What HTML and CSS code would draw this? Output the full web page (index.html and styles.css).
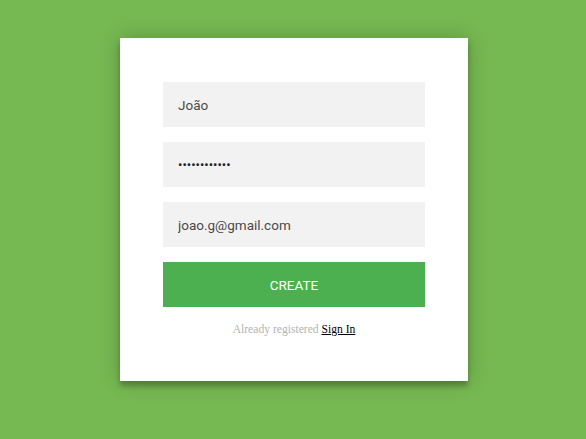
FILE: index.html
```html
<!DOCTYPE html>
<html>
<head>
<meta charset="utf-8">
<link rel="stylesheet" href="styles.css">
</head>
<body>
<div class="page">
  <form class="form">
    <input class="field" type="text" value="João">
    <input class="field field-pass" type="password" value="passwordpass">
    <input class="field" type="text" value="joao.g@gmail.com">
    <button class="btn" type="button">create</button>
    <p class="message">Already registered <a href="#">Sign In</a></p>
  </form>
</div>
</body>
</html>
```
FILE: styles.css
```css
html, body {
  margin: 0;
  padding: 0;
  height: 100%;
}
body {
  background: #76b852;
}
.page {
  padding: 38px 0 0 120px;
}
.form {
  box-sizing: border-box;
  width: 348px;
  padding: 44px 43px 44px 43px;
  background: #ffffff;
  box-shadow: 0 0 20px 0 rgba(0,0,0,0.2), 0 5px 5px 0 rgba(0,0,0,0.24);
  text-align: center;
  margin: 0;
}
.field {
  display: block;
  box-sizing: border-box;
  width: 100%;
  height: 45px;
  margin: 0 0 15px 0;
  padding: 0 15px;
  border: 0;
  outline: 0;
  background: #f2f2f2;
  font-family: Roboto, sans-serif;
  font-size: 13.5px;
  color: #4a4a4a;
}
.field-pass {
  color: #222222;
  font-size: 13px;
}
.btn {
  display: block;
  box-sizing: border-box;
  width: 100%;
  height: 45px;
  border: 0;
  outline: 0;
  padding: 0;
  background: #4caf50;
  color: #ffffff;
  font-family: Roboto, sans-serif;
  font-size: 13.5px;
  text-transform: uppercase;
}
.message {
  margin: 15px 0 0;
  color: #b3b3b3;
  font-family: "Liberation Serif", serif;
  font-size: 11.6px;
  line-height: 15px;
}
.message a {
  color: #000000;
  text-decoration: underline;
}
```
